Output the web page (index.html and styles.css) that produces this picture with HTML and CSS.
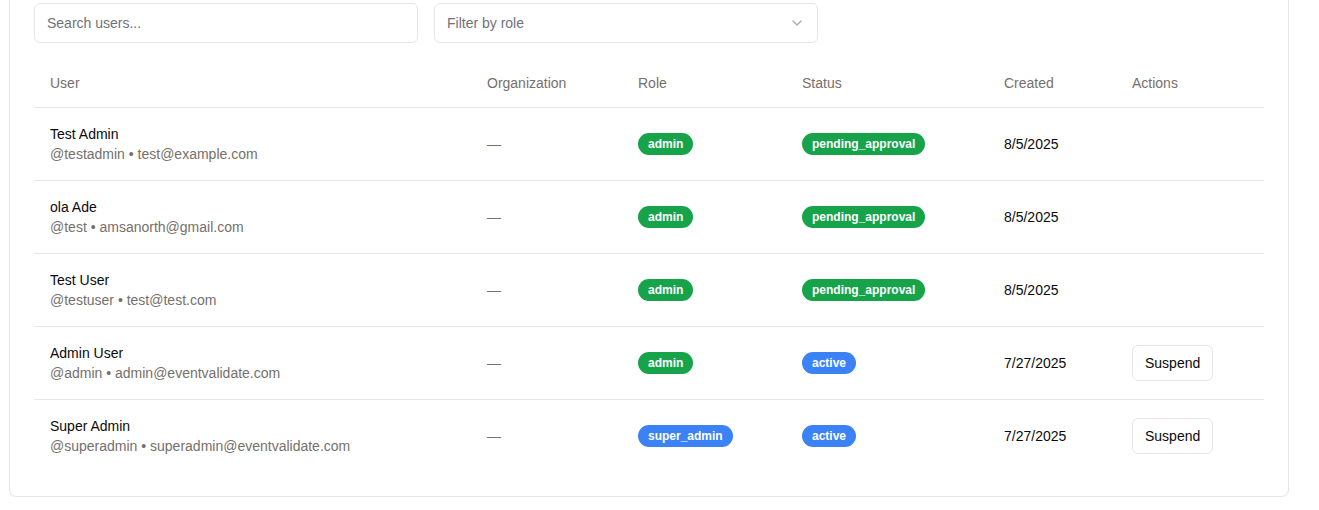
FILE: index.html
```html
<!DOCTYPE html>
<html>
<head>
<meta charset="utf-8">
<link rel="stylesheet" href="styles.css">
</head>
<body>
<div class="card">
  <div class="filters">
    <input class="input" type="text" placeholder="Search users...">
    <div class="select">
      <span class="placeholder">Filter by role</span>
      <svg class="chev" width="16" height="16" viewBox="0 0 24 24" fill="none" stroke="currentColor" stroke-width="2" stroke-linecap="round" stroke-linejoin="round"><path d="m6 9 6 6 6-6"/></svg>
    </div>
  </div>
  <table class="users">
    <colgroup>
      <col class="c-user"><col class="c-org"><col class="c-role"><col class="c-status"><col class="c-created"><col class="c-actions">
    </colgroup>
    <thead>
      <tr><th>User</th><th>Organization</th><th>Role</th><th>Status</th><th>Created</th><th>Actions</th></tr>
    </thead>
    <tbody>
      <tr>
        <td><div class="name">Test Admin</div><div class="sub">@testadmin • test@example.com</div></td>
        <td class="dash">—</td>
        <td><span class="badge green">admin</span></td>
        <td><span class="badge green">pending_approval</span></td>
        <td>8/5/2025</td>
        <td></td>
      </tr>
      <tr>
        <td><div class="name">ola Ade</div><div class="sub">@test • amsanorth@gmail.com</div></td>
        <td class="dash">—</td>
        <td><span class="badge green">admin</span></td>
        <td><span class="badge green">pending_approval</span></td>
        <td>8/5/2025</td>
        <td></td>
      </tr>
      <tr>
        <td><div class="name">Test User</div><div class="sub">@testuser • test@test.com</div></td>
        <td class="dash">—</td>
        <td><span class="badge green">admin</span></td>
        <td><span class="badge green">pending_approval</span></td>
        <td>8/5/2025</td>
        <td></td>
      </tr>
      <tr>
        <td><div class="name">Admin User</div><div class="sub">@admin • admin@eventvalidate.com</div></td>
        <td class="dash">—</td>
        <td><span class="badge green">admin</span></td>
        <td><span class="badge blue">active</span></td>
        <td>7/27/2025</td>
        <td><button class="btn">Suspend</button></td>
      </tr>
      <tr>
        <td><div class="name">Super Admin</div><div class="sub">@superadmin • superadmin@eventvalidate.com</div></td>
        <td class="dash">—</td>
        <td><span class="badge blue">super_admin</span></td>
        <td><span class="badge blue">active</span></td>
        <td>7/27/2025</td>
        <td><button class="btn">Suspend</button></td>
      </tr>
    </tbody>
  </table>
</div>
</body>
</html>
```
FILE: styles.css
```css
* { box-sizing: border-box; }
html, body { margin: 0; padding: 0; background: #fff; }
body {
  font-family: "Liberation Sans", Arial, sans-serif;
  color: #0a0a0a;
  font-size: 14px;
  padding-left: 9px;
  overflow: hidden;
}
.card {
  width: 1280px;
  margin-top: -22px;
  padding: 24px 24px 24px 24px;
  border: 1px solid #e5e7eb;
  border-radius: 8px;
  box-shadow: 0 1px 2px rgba(0,0,0,0.05);
  background: #fff;
}
.filters {
  display: flex;
  gap: 16px;
}
.input, .select {
  width: 384px;
  height: 40px;
  border: 1px solid #e5e7eb;
  border-radius: 6px;
  padding: 0 12px;
  font-family: inherit;
  font-size: 14px;
  background: #fff;
  color: #0a0a0a;
}
.input::placeholder { color: #71717a; }
.input:focus { outline: none; }
.select {
  display: flex;
  align-items: center;
  justify-content: space-between;
}
.placeholder { color: #71717a; }
.chev { color: #71717a; opacity: 0.6; width: 16px; height: 16px; }
.users {
  margin-top: 16px;
  width: 1230px;
  border-collapse: collapse;
  table-layout: fixed;
}
.c-user { width: 437px; }
.c-org { width: 151px; }
.c-role { width: 164px; }
.c-status { width: 202px; }
.c-created { width: 128px; }
.c-actions { width: 148px; }
.users th {
  height: 48px;
  padding: 0 16px;
  text-align: left;
  font-weight: 500;
  color: #75706b;
  font-size: 14px;
  vertical-align: middle;
  border-bottom: 1px solid #e5e7eb;
}
.users td {
  padding: 16px;
  height: 73px;
  vertical-align: middle;
  font-size: 14px;
  border-bottom: 1px solid #e5e7eb;
  line-height: 20px;
}
.users tbody tr:last-child td { border-bottom: none; height: 72px; }
.name { font-weight: 500; color: #0a0a0a; }
.sub { color: #75706b; }
.dash { color: #75706b; }
.badge {
  display: inline-block;
  border-radius: 9999px;
  padding: 0 10px;
  height: 22px;
  line-height: 22px;
  font-size: 12px;
  font-weight: 600;
  color: #fff;
}
.green { background: #16a34a; }
.blue { background: #3b82f6; }
.btn {
  height: 36px;
  padding: 0 12px;
  border: 1px solid #e5e7eb;
  border-radius: 6px;
  background: #fff;
  font-family: inherit;
  font-size: 14px;
  font-weight: 500;
  color: #0a0a0a;
}
```
